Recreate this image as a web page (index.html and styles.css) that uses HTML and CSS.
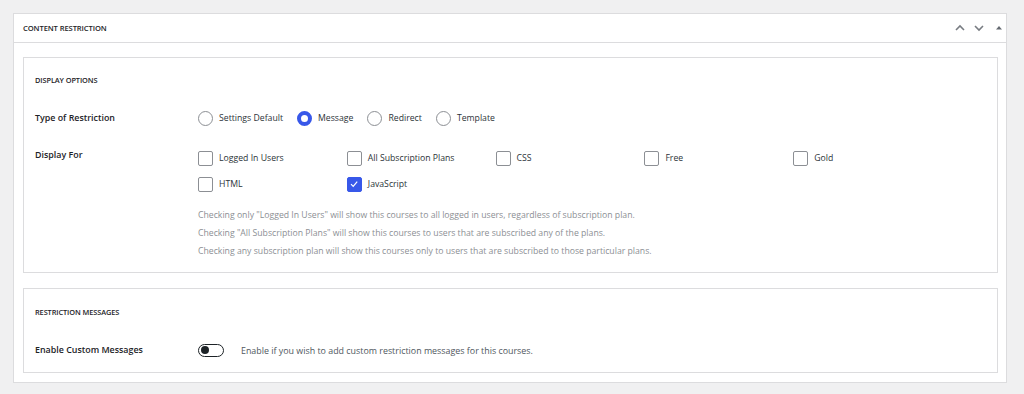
FILE: index.html
```html
<!DOCTYPE html>
<html lang="en">
<head>
<meta charset="utf-8">
<title>Content Restriction</title>
<link rel="stylesheet" href="styles.css">
</head>
<body>
<div class="postbox">
  <div class="postbox-header">
    <h2 class="postbox-title">CONTENT RESTRICTION</h2>
    <div class="handle-actions">
      <svg class="hicon" width="12" height="12" viewBox="0 0 12 12"><path d="M2 8 L6 4 L10 8" fill="none" stroke="#787c82" stroke-width="1.6"/></svg>
      <svg class="hicon" width="12" height="12" viewBox="0 0 12 12"><path d="M2 4 L6 8 L10 4" fill="none" stroke="#787c82" stroke-width="1.6"/></svg>
      <svg class="hicon small" width="8" height="12" viewBox="0 0 8 12"><path d="M1 7.5 L4 4 L7 7.5 Z" fill="#646970"/></svg>
    </div>
  </div>
  <div class="postbox-inside">
    <section class="card card-display">
      <h3 class="card-title">DISPLAY OPTIONS</h3>
      <div class="field field-type">
        <div class="field-label">Type of Restriction</div>
        <div class="radio-group">
          <label class="opt"><span class="radio"></span>Settings Default</label>
          <label class="opt"><span class="radio checked"></span>Message</label>
          <label class="opt"><span class="radio"></span>Redirect</label>
          <label class="opt"><span class="radio"></span>Template</label>
        </div>
      </div>
      <div class="field field-display">
        <div class="field-label">Display For</div>
        <div class="field-body">
          <div class="check-grid">
            <label class="opt"><span class="check"></span>Logged In Users</label>
            <label class="opt"><span class="check"></span>All Subscription Plans</label>
            <label class="opt"><span class="check"></span>CSS</label>
            <label class="opt"><span class="check"></span>Free</label>
            <label class="opt"><span class="check"></span>Gold</label>
            <label class="opt"><span class="check"></span>HTML</label>
            <label class="opt"><span class="check checked"><svg width="10" height="10" viewBox="0 0 10 10"><path d="M2 5.2 L4.2 7.4 L8.2 2.6" fill="none" stroke="#fff" stroke-width="1.2"/></svg></span>JavaScript</label>
          </div>
          <div class="help">
            <p>Checking only "Logged In Users" will show this courses to all logged in users, regardless of subscription plan.</p>
            <p>Checking "All Subscription Plans" will show this courses to users that are subscribed any of the plans.</p>
            <p>Checking any subscription plan will show this courses only to users that are subscribed to those particular plans.</p>
          </div>
        </div>
      </div>
    </section>
    <section class="card card-messages">
      <h3 class="card-title">RESTRICTION MESSAGES</h3>
      <div class="field field-toggle">
        <div class="field-label">Enable Custom Messages</div>
        <div class="toggle-row">
          <span class="toggle"><span class="knob"></span></span>
          <span class="toggle-desc">Enable if you wish to add custom restriction messages for this courses.</span>
        </div>
      </div>
    </section>
  </div>
</div>
</body>
</html>
```
FILE: styles.css
```css
* { box-sizing: border-box; }
html, body { margin: 0; padding: 0; }
body {
  background: #f0f0f1;
  font-family: "Open Sans", "Noto Sans", sans-serif;
  color: #1d2327;
  padding: 13px 0 0 13px;
}
.postbox {
  width: 994px;
  background: #fff;
  border: 1px solid #dcdcde;
}
.postbox-header {
  height: 29px;
  border-bottom: 1px solid #dcdcde;
  display: flex;
  align-items: center;
  justify-content: space-between;
  padding: 0 3px 0 9px;
}
.postbox-title {
  margin: 0;
  font-size: 7.6px;
  font-weight: 600;
  letter-spacing: -0.1px;
  color: #1d2327;
}
.handle-actions {
  display: flex;
  align-items: center;
  gap: 7px;
}
.hicon { display: block; }
.hicon.small { margin-left: 3px; }
.postbox-inside {
  padding: 14px 8px 9px 9px;
  display: flex;
  flex-direction: column;
  gap: 15px;
}
.card {
  border: 1px solid #dcdcde;
  padding: 15px 11px 12px;
}
.card-messages { padding-top: 16px; }
.card-title {
  margin: 0;
  font-size: 7.4px;
  line-height: 14px;
  font-weight: 600;
  color: #1d2327;
  letter-spacing: -0.1px;
}
.field {
  display: flex;
  align-items: flex-start;
}
.field-type { margin-top: 21px; align-items: center; height: 20px; }
.field-display { margin-top: 20px; }
.field-toggle { margin-top: 21px; align-items: center; height: 20px; }
.field-label {
  width: 163px;
  flex: none;
  font-size: 8.9px;
  font-weight: 600;
  line-height: 14px;
  color: #1d2327;
}
.radio-group {
  display: flex;
  align-items: center;
  gap: 14px;
}
.opt {
  display: flex;
  align-items: center;
  gap: 6px;
  font-size: 8.7px;
  color: #2c3338;
  height: 20px;
  white-space: nowrap;
}
.radio {
  width: 15px;
  height: 15px;
  border-radius: 50%;
  border: 1px solid #8c8f94;
  flex: none;
}
.radio.checked {
  border: 4.5px solid #3858e9;
  background: #fff;
}
.check-grid {
  display: grid;
  grid-template-columns: repeat(5, 148.8px);
  row-gap: 6px;
}
.check {
  width: 15px;
  height: 15px;
  border: 1px solid #8c8f94;
  border-radius: 2px;
  flex: none;
  display: flex;
  align-items: center;
  justify-content: center;
}
.check.checked {
  background: #3858e9;
  border-color: #3858e9;
}
.help {
  margin-top: 12px;
  color: #8c8f94;
  font-size: 8.7px;
  line-height: 18px;
}
.help p { margin: 0; }
.toggle-row {
  display: flex;
  align-items: center;
  gap: 17px;
}
.toggle {
  width: 26px;
  height: 13px;
  border: 1.5px solid #1d2327;
  border-radius: 7px;
  display: flex;
  align-items: center;
  padding-left: 2px;
}
.knob {
  width: 8px;
  height: 8px;
  border-radius: 50%;
  background: #1d2327;
}
.toggle-desc {
  font-size: 8.9px;
  color: #50575e;
}
```
